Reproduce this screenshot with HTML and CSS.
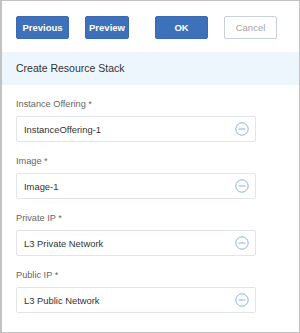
FILE: index.html
```html
<!DOCTYPE html>
<html lang="en">
<head>
    <meta charset="UTF-8">
    <title>Create Resource Stack</title>
    <link rel="stylesheet" href="styles.css">
</head>
<body>
    <div class="frame">
        <div class="toolbar">
            <button class="btn btn-primary btn-prev">Previous</button>
            <button class="btn btn-primary btn-preview">Preview</button>
            <button class="btn btn-primary btn-ok">OK</button>
            <button class="btn btn-default btn-cancel">Cancel</button>
        </div>
        <div class="title">Create Resource Stack</div>
        <div class="form">
            <div class="field">
                <div class="label">Instance Offering *</div>
                <div class="input">
                    <span>InstanceOffering-1</span>
                    <svg class="remove" viewBox="0 0 14 14" width="14" height="14"><circle cx="7" cy="7" r="6.2"/><line x1="3.6" y1="7" x2="10.4" y2="7"/></svg>
                </div>
            </div>
            <div class="field">
                <div class="label">Image *</div>
                <div class="input">
                    <span>Image-1</span>
                    <svg class="remove" viewBox="0 0 14 14" width="14" height="14"><circle cx="7" cy="7" r="6.2"/><line x1="3.6" y1="7" x2="10.4" y2="7"/></svg>
                </div>
            </div>
            <div class="field">
                <div class="label">Private IP *</div>
                <div class="input">
                    <span>L3 Private Network</span>
                    <svg class="remove" viewBox="0 0 14 14" width="14" height="14"><circle cx="7" cy="7" r="6.2"/><line x1="3.6" y1="7" x2="10.4" y2="7"/></svg>
                </div>
            </div>
            <div class="field">
                <div class="label">Public IP *</div>
                <div class="input">
                    <span>L3 Public Network</span>
                    <svg class="remove" viewBox="0 0 14 14" width="14" height="14"><circle cx="7" cy="7" r="6.2"/><line x1="3.6" y1="7" x2="10.4" y2="7"/></svg>
                </div>
            </div>
        </div>
    </div>
</body>
</html>
```

FILE: styles.css
```css
* {
    box-sizing: border-box;
}
body {
    margin: 0;
    background: white;
    font-family: "Liberation Sans", Arial, sans-serif;
}
.frame {
    width: 300px;
    height: 333px;
    border-style: solid;
    border-color: #c2c2c2;
    border-width: 1px 1px 1px 2px;
    background: white;
}
.toolbar {
    display: flex;
    padding: 15px 14px 13px;
}
.btn {
    height: 23px;
    padding: 0;
    font-family: inherit;
    font-size: 9.5px;
    border-radius: 2px;
    cursor: pointer;
}
.btn-primary {
    background-color: #3d71b9;
    border: 1px solid #3a6bb0;
    color: white;
    font-weight: bold;
}
.btn-default {
    background-color: white;
    border: 1px solid #c9d0da;
    color: #a3a3a3;
}
.btn-prev {
    width: 53px;
}
.btn-preview {
    width: 44px;
    margin-left: 16px;
}
.btn-ok {
    width: 53px;
    margin-left: 26px;
}
.btn-cancel {
    width: 53px;
    margin-left: 16px;
}
.title {
    height: 33px;
    line-height: 33px;
    padding-left: 14px;
    background-color: #eef6fd;
    color: #333;
    font-size: 10.5px;
}
.form {
    padding: 13px 14px 0;
}
.field {
    margin-bottom: 13px;
}
.label {
    height: 12px;
    line-height: 12px;
    font-size: 9.2px;
    color: #666;
    margin-bottom: 6px;
}
.input {
    width: 240px;
    height: 26px;
    border: 1px solid #e1e5eb;
    border-radius: 2px;
    display: flex;
    align-items: center;
    justify-content: space-between;
    padding: 0 6px 0 7px;
    font-size: 9.4px;
    color: #333;
}
.remove {
    fill: none;
    stroke: #8cb0e3;
    stroke-width: 1;
}
```
